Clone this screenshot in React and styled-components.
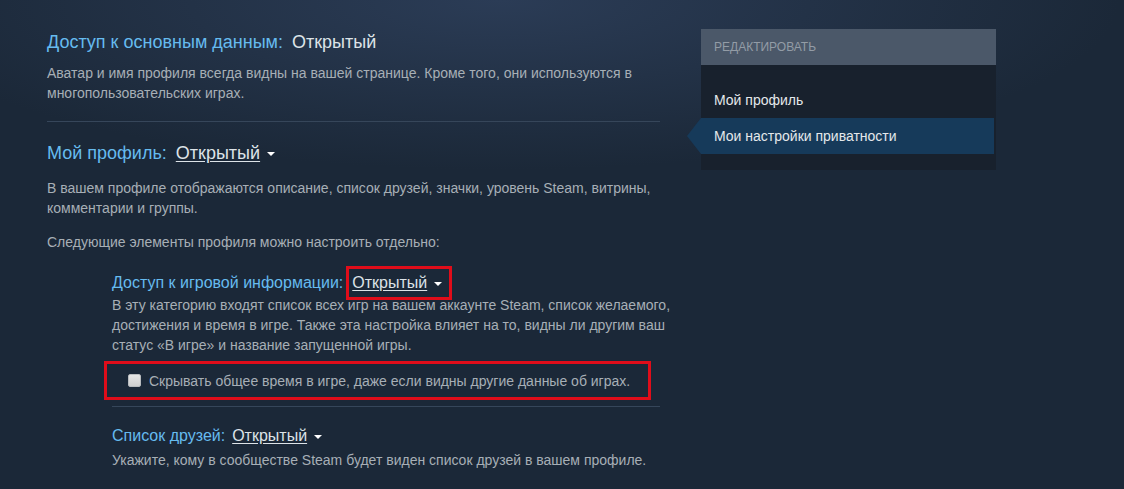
import React from 'react'
import styled, { createGlobalStyle } from 'styled-components'

const GlobalStyle = createGlobalStyle`
    body {
        margin: 0;
        background: #1b2838;
        font-family: "Liberation Sans", Arial, sans-serif;
    }
`

const Page = styled.div`
    min-height: 489px;
    display: flex;
    align-items: flex-start;
    padding: 0 0 0 47px;
    box-sizing: border-box;
    background:
        radial-gradient(ellipse 620px 170px at 500px 0, #2b3c56 0%, rgba(27, 40, 56, 0) 100%),
        #1b2838;
`

const Main = styled.div`
    width: 613px;
    padding-top: 30px;
`

const Title = styled.div`
    font-size: ${p => (p.small ? '16px' : '18px')};
    line-height: ${p => (p.small ? '22px' : '24px')};
    color: #66bbef;
    margin-top: ${p => p.top || 0}px;
    white-space: nowrap;
`

const Value = styled.span`
    color: #dde3e8;
    margin-left: ${p => p.gap || 4}px;
`

const Dropdown = styled.span`
    color: #dde3e8;
    margin-left: ${p => p.gap || 4}px;
    display: inline-flex;
    align-items: center;
    gap: 7px;
    ${p => p.marked && `
        outline: 3px solid #e00d1a;
        outline-offset: 3px;
        padding-right: 4px;
    `}
`

const Underlined = styled.span`
    text-decoration: underline;
    text-underline-offset: 2px;
`

const Caret = styled.span`
    width: 0;
    height: 0;
    border-left: 4px solid transparent;
    border-right: 4px solid transparent;
    border-top: 4px solid #ffffff;
    margin-top: 2px;
`

const Text = styled.p`
    margin: ${p => p.top || 0}px 0 0 0;
    font-size: 14px;
    line-height: 20px;
    color: #a7afb6;
`

const Divider = styled.div`
    height: 1px;
    width: ${p => p.width || 613}px;
    background: #36465a;
    margin-top: ${p => p.top || 0}px;
`

const Nested = styled.div`
    margin-left: 65px;
    width: 565px;
`

const Marked = styled.div`
    margin: 6px 0 0 -8px;
    width: 547px;
    height: 39px;
    box-sizing: border-box;
    border: 3px solid #e00d1a;
    display: flex;
    align-items: center;
    gap: 8px;
    padding-left: 21px;
`

const Check = styled.span`
    width: 13px;
    height: 13px;
    box-sizing: border-box;
    border-radius: 2px;
    background: linear-gradient(#e6e6e6, #cfcfcf);
    border: 1px solid #b9bcbf;
    margin-top: -1px;
`

const CheckLabel = styled.span`
    font-size: 14px;
    color: #a7afb6;
`

const Side = styled.div`
    margin: 29px 0 0 41px;
    width: 295px;
    background: #18212d;
`

const SideHeader = styled.div`
    height: 36px;
    background: #4b5869;
    display: flex;
    align-items: center;
    padding-left: 13px;
    font-size: 12px;
    color: #939ca6;
    text-transform: uppercase;
`

const SideList = styled.div`
    padding: 17px 2px 16px 0;
`

const SideItem = styled.div`
    position: relative;
    height: 36px;
    display: flex;
    align-items: center;
    padding-left: 13px;
    font-size: 14px;
    color: #e4e8eb;
    ${p => p.active && `
        background: #163a5a;
        &::before {
            content: '';
            position: absolute;
            left: -14px;
            top: 0;
            border-top: 18px solid transparent;
            border-bottom: 18px solid transparent;
            border-right: 14px solid #163a5a;
        }
    `}
`

function App() {
    return (
        <Page>
            <GlobalStyle />
            <Main>
                <Title>
                    Доступ к основным данным:<Value gap={9}>Открытый</Value>
                </Title>
                <Text top={9}>
                    Аватар и имя профиля всегда видны на вашей странице. Кроме того, они используются в
                    многопользовательских играх.
                </Text>
                <Divider top={18} />

                <Title top={19}>
                    Мой профиль:
                    <Dropdown gap={9}>
                        <Underlined>Открытый</Underlined>
                        <Caret />
                    </Dropdown>
                </Title>
                <Text top={13}>
                    В вашем профиле отображаются описание, список друзей, значки, уровень Steam, витрины,
                    комментарии и группы.
                </Text>
                <Text top={14}>Следующие элементы профиля можно настроить отдельно:</Text>

                <Nested>
                    <Title small top={20}>
                        Доступ к игровой информации:
                        <Dropdown marked gap={9}>
                            <Underlined>Открытый</Underlined>
                            <Caret />
                        </Dropdown>
                    </Title>
                    <Text top={1}>
                        В эту категорию входят список всех игр на вашем аккаунте Steam, список желаемого,
                        достижения и время в игре. Также эта настройка влияет на то, видны ли другим ваш
                        статус «В игре» и название запущенной игры.
                    </Text>
                    <Marked>
                        <Check />
                        <CheckLabel>Скрывать общее время в игре, даже если видны другие данные об играх.</CheckLabel>
                    </Marked>
                    <Divider width={548} top={6} />

                    <Title small top={18}>
                        Список друзей:
                        <Dropdown gap={7}>
                            <Underlined>Открытый</Underlined>
                            <Caret />
                        </Dropdown>
                    </Title>
                    <Text top={3}>Укажите, кому в сообществе Steam будет виден список друзей в вашем профиле.</Text>
                </Nested>
            </Main>

            <Side>
                <SideHeader>Редактировать</SideHeader>
                <SideList>
                    <SideItem>Мой профиль</SideItem>
                    <SideItem active>Мои настройки приватности</SideItem>
                </SideList>
            </Side>
        </Page>
    )
}

export default App
